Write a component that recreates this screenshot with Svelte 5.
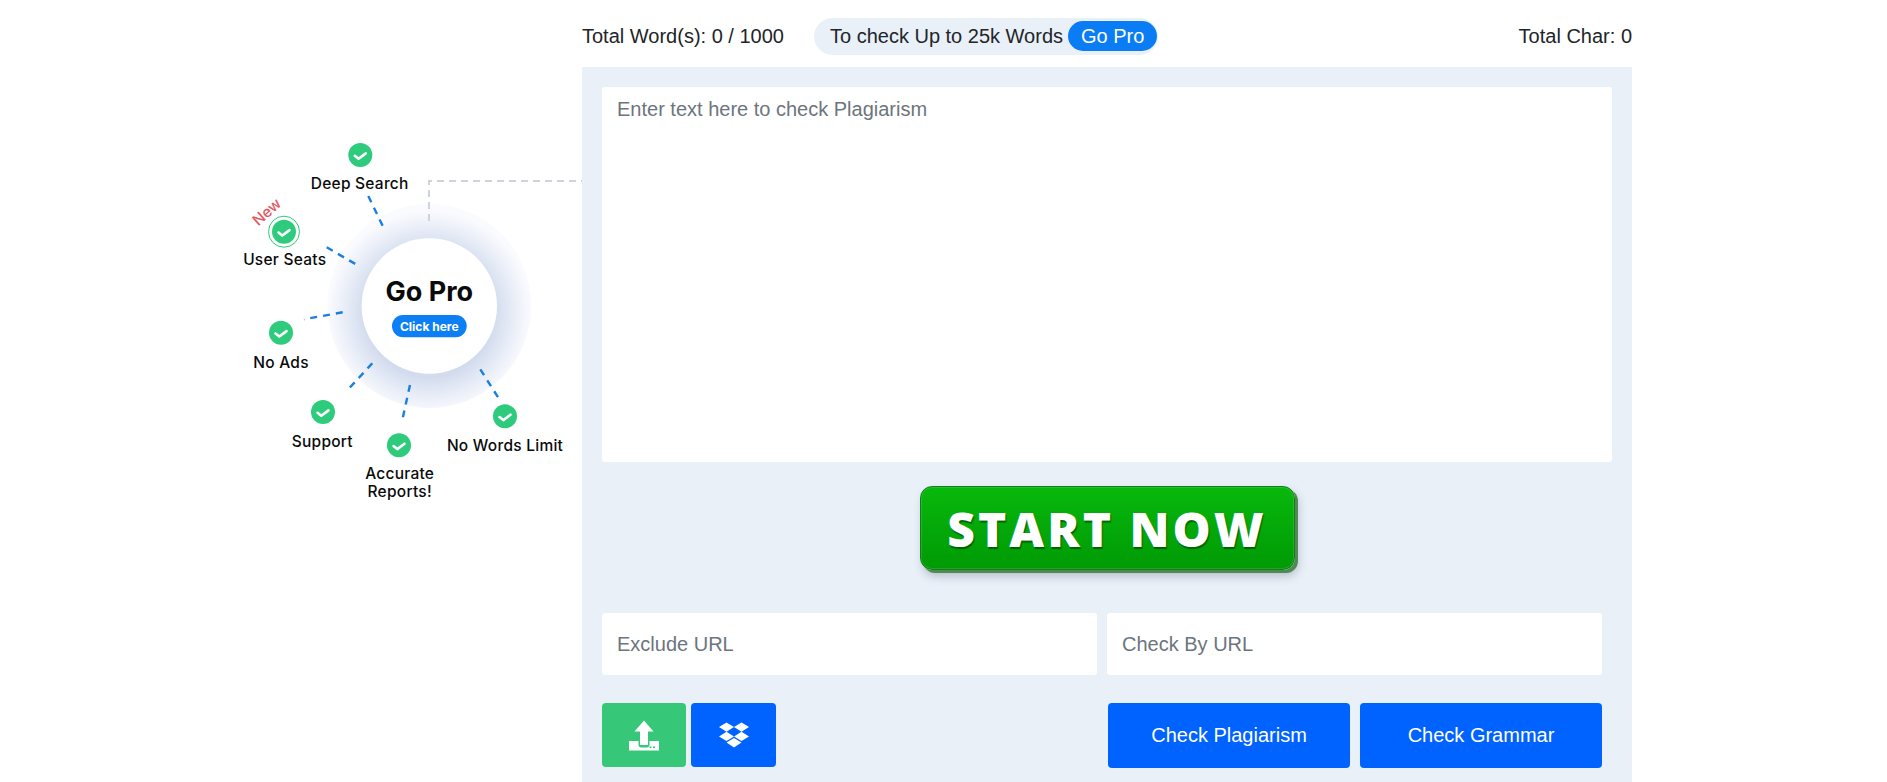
<script>
	const spokes = [
		[368.3, 196, 385, 230.7],
		[326.7, 247.3, 360, 266.7],
		[342.7, 312.3, 304, 319.3],
		[372.3, 363.3, 346, 391.7],
		[410, 385, 401.7, 422.7],
		[480.3, 369.3, 499.3, 399.3]
	];

	const perks = [
		{ x: 360.3, y: 155, label: ['Deep Search'], lx: 359.7, ly: 189 },
		{ x: 284, y: 231.7, label: ['User Seats'], lx: 284.7, ly: 265, ring: true },
		{ x: 281, y: 332.7, label: ['No Ads'], lx: 281, ly: 368 },
		{ x: 323, y: 412, label: ['Support'], lx: 322.3, ly: 447 },
		{ x: 399, y: 445.3, label: ['Accurate', 'Reports!'], lx: 399.7, ly: 479 },
		{ x: 505, y: 416.3, label: ['No Words Limit'], lx: 505, ly: 451 }
	];
</script>

<div class="page">
	<aside class="promo">
		<svg width="582" height="600" viewBox="0 0 582 600" aria-label="Go Pro features">
			<defs>
				<radialGradient id="halo" cy="0.53">
					<stop offset="0.64" stop-color="#d3dcee" />
					<stop offset="0.78" stop-color="#e3e9f5" />
					<stop offset="0.9" stop-color="#f0f3fa" />
					<stop offset="1" stop-color="#fafbfe" />
				</radialGradient>
			</defs>
			<circle cx="429.3" cy="306" r="102" fill="url(#halo)" />
			<circle cx="429.3" cy="306" r="67.7" fill="#fff" />
			<path d="M429 221V181H582" class="link" />
			{#each spokes as [x1, y1, x2, y2]}
				<line {x1} {y1} {x2} {y2} class="spoke" />
			{/each}
			{#each perks as perk}
				{#if perk.ring}
					<circle cx={perk.x} cy={perk.y} r="15.5" fill="#fff" stroke="#2ecb7d" stroke-width="1" />
				{/if}
				<circle cx={perk.x} cy={perk.y} r="12" fill="#2ecb7d" />
				<path
					d="M{perk.x - 5.5} {perk.y + 0.8}l3.8 3l7.2-5.4"
					fill="none"
					stroke="#fff"
					stroke-width="2.6"
					stroke-linecap="round"
					stroke-linejoin="round"
				/>
				{#each perk.label as line, i}
					<text x={perk.lx} y={perk.ly + i * 18} class="perk">{line}</text>
				{/each}
			{/each}
			<text x="267" y="217" class="new" transform="rotate(-42 267 212)">New</text>
			<text x="429.3" y="301" class="title">Go Pro</text>
			<rect x="392" y="315" width="74.7" height="22.3" rx="11" fill="#0d7ff5" />
			<text x="429.3" y="330.5" class="click">Click here</text>
		</svg>
	</aside>

	<main class="checker">
		<div class="counts">
			<span>Total Word(s): 0 / 1000</span>
			<div class="upsell">
				<span>To check Up to 25k Words</span>
				<a href="#pro">Go Pro</a>
			</div>
			<span class="chars">Total Char: 0</span>
		</div>

		<section class="panel">
			<textarea placeholder="Enter text here to check Plagiarism"></textarea>

			<div class="start-row">
				<button class="start">START NOW</button>
			</div>

			<div class="url-row">
				<input placeholder="Exclude URL" />
				<input placeholder="Check By URL" />
			</div>

			<div class="actions">
				<div class="sources">
					<button class="source upload" aria-label="Upload file">
						<svg width="30" height="31" viewBox="0 0 30 31" fill="#fff">
							<path d="M0 21H9.5V24.5C9.5 26.5 10.5 27.5 12.5 27.5H17.5C19.5 27.5 20.5 26.5 20.5 24.5V21H30V30.5H0Z" />
							<path d="M15 0.5L24.5 11.5H19V25H11V11.5H5.5Z" />
							<rect x="20.5" y="26.5" width="2" height="1.6" fill="#36c878" />
							<rect x="24" y="26.5" width="2" height="1.6" fill="#36c878" />
						</svg>
					</button>
					<button class="source dropbox" aria-label="Dropbox">
						<svg width="30" height="26" viewBox="0 0 30 26" fill="#fff">
							<path d="M7.5 0.5L15 5L7.5 9.7L0 5Z" />
							<path d="M22.5 0.5L30 5L22.5 9.7L15 5Z" />
							<path d="M0 14.4L7.5 9.7L15 14.4L7.5 19Z" />
							<path d="M30 14.4L22.5 9.7L15 14.4L22.5 19Z" />
							<path d="M7.5 20.5L15 16L22.5 20.5L15 25.5Z" />
						</svg>
					</button>
				</div>
				<div class="checks">
					<button class="check">Check Plagiarism</button>
					<button class="check">Check Grammar</button>
				</div>
			</div>
		</section>
	</main>
</div>

<style>
	:global(body) {
		margin: 0;
		background: #fff;
		overflow: hidden;
		font-family: 'Liberation Sans', Arial, sans-serif;
		color: #212529;
	}

	.page {
		display: flex;
		height: 782px;
	}

	.promo {
		width: 582px;
		flex: none;
	}

	.promo svg {
		display: block;
	}

	.link {
		fill: none;
		stroke: #d0d3d9;
		stroke-width: 2;
		stroke-dasharray: 7 5;
	}

	.spoke {
		stroke: #1a7fe0;
		stroke-width: 2.4;
		stroke-dasharray: 7 6;
	}

	text {
		font-family: Inter, 'Noto Sans', sans-serif;
		text-anchor: middle;
	}

	.perk {
		font-size: 15.5px;
		font-weight: 500;
		letter-spacing: 0.25px;
		fill: #0a0a0a;
	}

	.new {
		font-size: 15px;
		font-weight: 500;
		fill: #e2585f;
	}

	.title {
		font-size: 27px;
		font-weight: 700;
		fill: #0a0a0a;
	}

	.click {
		font-size: 12px;
		font-weight: 700;
		fill: #fff;
	}

	.checker {
		width: 1050px;
		flex: none;
		display: flex;
		flex-direction: column;
	}

	.counts {
		flex: none;
		height: 67px;
		display: flex;
		align-items: center;
		font-size: 20px;
		padding-top: 6px;
		box-sizing: border-box;
	}

	.upsell {
		margin-left: 30px;
		height: 37px;
		display: flex;
		align-items: center;
		gap: 5px;
		padding: 0 1px 0 16px;
		border-radius: 19px;
		background: #e9f0f8;
		margin-top: -1px;
	}

	.upsell a {
		height: 30px;
		line-height: 30px;
		padding: 0 13px;
		border-radius: 15px;
		background: #0a7cf4;
		color: #fff;
		text-decoration: none;
	}

	.chars {
		margin-left: auto;
	}

	.panel {
		flex: 1;
		min-height: 0;
		background: #e9f0f8;
		padding: 20px;
		box-sizing: border-box;
	}

	textarea,
	input {
		display: block;
		box-sizing: border-box;
		border: none;
		border-radius: 3px;
		background: #fff;
		font-family: inherit;
		font-size: 20px;
		padding: 0 15px;
		outline: none;
	}

	textarea::placeholder,
	input::placeholder {
		color: #6c757d;
		opacity: 1;
	}

	textarea {
		width: 1010px;
		height: 375px;
		padding-top: 11px;
		resize: none;
	}

	.start-row {
		display: flex;
		justify-content: center;
		padding-top: 24px;
	}

	.start {
		width: 375px;
		height: 84px;
		box-sizing: border-box;
		border: 1px solid #157a1b;
		border-radius: 12px;
		background: linear-gradient(#08b80c, #009a05);
		box-shadow:
			inset 0 0 0 1px rgba(255, 255, 255, 0.12),
			3px 3px 0 #4f8a55,
			3px 6px 10px rgba(60, 70, 90, 0.3);
		color: #fff;
		font-family: 'Open Sans', sans-serif;
		font-size: 48px;
		font-weight: 800;
		letter-spacing: 3px;
		text-shadow: 1px 2px 1px rgba(0, 70, 0, 0.7);
		padding: 0;
	}

	.url-row {
		display: flex;
		gap: 10px;
		margin-top: 43px;
	}

	.url-row input {
		width: 495px;
		height: 62px;
	}

	.actions {
		display: flex;
		justify-content: space-between;
		width: 1000px;
		margin-top: 28px;
	}

	.sources,
	.checks {
		display: flex;
	}

	.sources {
		gap: 5px;
	}

	.checks {
		gap: 10px;
	}

	button {
		border: none;
		cursor: pointer;
		font-family: inherit;
	}

	.source {
		height: 64px;
		border-radius: 4px;
		display: flex;
		align-items: center;
		justify-content: center;
		padding: 0;
	}

	.upload {
		width: 84px;
		background: #36c878;
	}

	.dropbox {
		width: 85px;
		background: #0062ff;
	}

	.check {
		width: 242px;
		height: 65px;
		border-radius: 4px;
		background: #0062ff;
		color: #fff;
		font-size: 20px;
	}
</style>
